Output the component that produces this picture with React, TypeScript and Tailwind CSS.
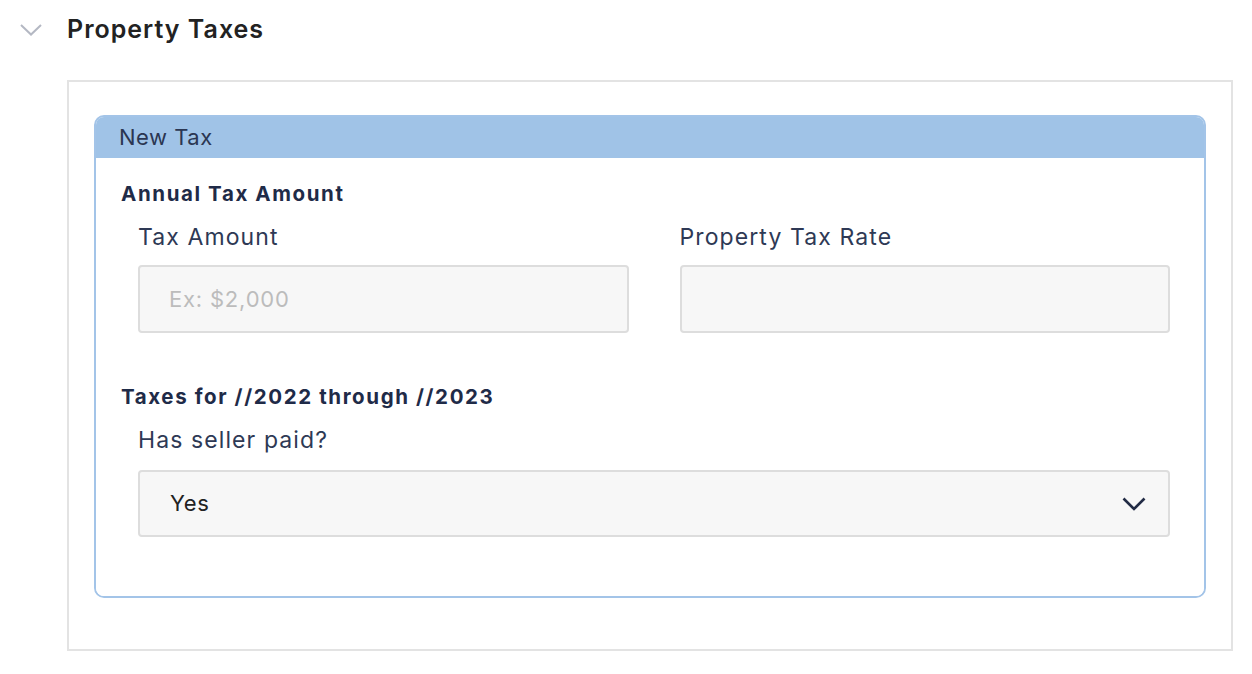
import React from 'react'

const FONT = { fontFamily: 'Inter, "Noto Sans", sans-serif' }

const App: React.FC = () => {
  return (
    <div className="w-[1252px] h-[674px] bg-white overflow-hidden" style={FONT}>
      {/* Section header */}
      <div className="flex items-center h-[60px] pl-[20px]">
        <svg width="22" height="12" viewBox="0 0 22 12" className="mr-[25px]">
          <path d="M1 1 L11 10.5 L21 1" fill="none" stroke="#b4b8c3" strokeWidth="2" />
        </svg>
        <h2 className="text-[25px] font-semibold text-[#222222] tracking-[1px]">Property Taxes</h2>
      </div>

      {/* Outer box */}
      <div className="ml-[67px] mt-[20px] w-[1166px] h-[571px] border-2 border-[#e3e3e3] pt-[33px] px-[25px]">
        <div className="rounded-[10px] border-2 border-[#a3c4e8] overflow-hidden">
          <div className="h-[41px] bg-[#a0c3e7] flex items-center pl-[23px]">
            <span className="text-[22px] text-[#2b3652] tracking-[0.5px]">New Tax</span>
          </div>
          <div className="pl-[25px] pr-[34px] pt-[23px] pb-[59px] bg-white">
            <h3 className="text-[20.5px] font-bold text-[#1f2b48] leading-[26px] tracking-[1.6px]">Annual Tax Amount</h3>
            <div className="grid grid-cols-2 gap-x-[51px] pl-[17px] mt-[15px]">
              <div>
                <label className="block text-[23px] text-[#2e3955] leading-[30px] tracking-[1.1px]">Tax Amount</label>
                <div className="mt-[13px] h-[68px] rounded-[4px] border-2 border-[#dddddd] bg-[#f7f7f7] flex items-center pl-[29px]">
                  <span className="text-[22px] text-[#bcbcbc] tracking-[0.8px]">Ex: $2,000</span>
                </div>
              </div>
              <div>
                <label className="block text-[23px] text-[#2e3955] leading-[30px] tracking-[1.1px]">Property Tax Rate</label>
                <div className="mt-[13px] h-[68px] rounded-[4px] border-2 border-[#dddddd] bg-[#f7f7f7]" />
              </div>
            </div>
            <h3 className="mt-[51px] text-[20.5px] font-bold text-[#1f2b48] leading-[26px] tracking-[1.6px]">Taxes for //2022 through //2023</h3>
            <div className="pl-[17px] mt-[15px]">
              <label className="block text-[23px] text-[#2e3955] leading-[30px] tracking-[1.1px]">Has seller paid?</label>
              <div className="mt-[15px] h-[67px] rounded-[4px] border-2 border-[#dddddd] bg-[#f7f7f7] flex items-center justify-between pl-[30px] pr-[22px]">
                <span className="text-[22px] text-[#222222] tracking-[0.6px]">Yes</span>
                <svg width="24" height="14" viewBox="0 0 24 14">
                  <path d="M1.5 1.5 L12 12 L22.5 1.5" fill="none" stroke="#222b45" strokeWidth="2.6" />
                </svg>
              </div>
            </div>
          </div>
        </div>
      </div>
    </div>
  )
}

export default App
